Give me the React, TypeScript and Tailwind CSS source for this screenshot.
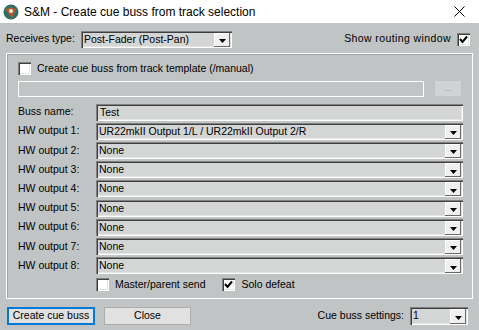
import React from "react";

const sunken =
  "shadow-[inset_1px_1px_0_#808080,inset_2px_2px_0_#404040,inset_-1px_-1px_0_#ffffff,inset_-2px_-2px_0_#e4e4e4]";

function Arrow() {
  return (
    <div className="absolute right-[2px] top-[2px] bottom-[1px] w-[16px] bg-[#f0f0f0] shadow-[inset_-1px_-1px_0_#696969,inset_1px_1px_0_#ffffff] flex items-center justify-center">
      <svg width="7" height="4" viewBox="0 0 7 4" className="mt-[3px]">
        <path d="M0 0h7L3.5 4z" fill="#000" />
      </svg>
    </div>
  );
}

function Combo({ text, className }: { text: string; className: string }) {
  return (
    <div className={`relative h-[17px] bg-[#d4d5d5] ${sunken} ${className}`}>
      <span className="absolute left-[3px] top-[1px] leading-[15px] whitespace-nowrap">{text}</span>
      <Arrow />
    </div>
  );
}

function Check({ checked }: { checked?: boolean }) {
  return (
    <div className={`w-[13px] h-[13px] shrink-0 bg-white ${sunken} flex items-center justify-center`}>
      {checked && (
        <svg width="9" height="9" viewBox="0 0 9 9">
          <path d="M1 4l2.5 3L8 1.5" stroke="#000" strokeWidth="2" fill="none" />
        </svg>
      )}
    </div>
  );
}

export default function App() {
  const outputs = [
    "UR22mkII Output 1/L / UR22mkII Output 2/R",
    "None",
    "None",
    "None",
    "None",
    "None",
    "None",
    "None",
  ];

  return (
    <div className="w-[479px] h-[330px] bg-[#c0c4c4] flex flex-col overflow-hidden text-[10.5px] text-black whitespace-nowrap font-['Liberation_Sans',Arial,sans-serif]">
      {/* title bar */}
      <div className="h-[23px] bg-white flex items-center shrink-0">
        <svg width="16" height="16" viewBox="0 0 16 16" className="ml-[3px]">
          <circle cx="8" cy="8" r="7.5" fill="#2d6f66" />
          <path d="M3 5.5C5 3 10 2.5 13 5.5L9 14C7 12 5 9 3 5.5z" fill="#b55a2b" />
          <circle cx="8" cy="7" r="2" fill="#e7e3dc" />
        </svg>
        <span className="ml-[5px] text-[12px] leading-none">
          S&amp;M - Create cue buss from track selection
        </span>
        <svg width="11" height="11" viewBox="0 0 11 11" className="ml-auto mr-[14px]">
          <path d="M0.5 0.5l10 10M10.5 0.5l-10 10" stroke="#000" strokeWidth="1" />
        </svg>
      </div>

      {/* receives type row */}
      <div className="flex items-center h-[18px] mt-[7px] px-[6px]">
        <span className="w-[75px]">Receives type:</span>
        <Combo text="Post-Fader (Post-Pan)" className="w-[151px]" />
        <span className="ml-auto mr-[6px] tracking-[0.4px]">Show routing window</span>
        <div className="mr-[3px]">
          <Check checked />
        </div>
      </div>

      {/* group box */}
      <div className="mx-[6px] mt-[5px] h-[246px] border border-[#ffffff] shadow-[inset_1px_1px_0_#a0a4a4] px-[11px] pt-[7px]">
        <div className="flex items-center gap-[6px]">
          <Check />
          <span>Create cue buss from track template (/manual)</span>
        </div>
        <div className="flex items-center mt-[4px]">
          <div className="w-[407px] h-[16px] border border-white" />
          <div className="ml-[11px] w-[26px] h-[15px] bg-[#d0d3d3] text-[#9a9a9a] text-[9px] flex items-center justify-center leading-none">
            ...
          </div>
        </div>
        <div className="flex items-center mt-[7px] h-[17px]">
          <span className="w-[78px]">Buss name:</span>
          <div className={`relative flex-1 h-[17px] bg-[#d4d5d5] mr-[-2px] ${sunken}`}>
            <span className="absolute left-[4px] top-[1px] leading-[15px]">Test</span>
          </div>
        </div>
        <div className="flex flex-col gap-[2.2px] mt-[2px] mr-[-2px]">
          {outputs.map((o, i) => (
            <div key={i} className="flex items-center h-[17px]">
              <span className="w-[78px]">HW output {i + 1}:</span>
              <Combo text={o} className="flex-1" />
            </div>
          ))}
        </div>
        <div className="flex items-center mt-[3px] ml-[78px] h-[15px]">
          <Check />
          <span className="ml-[6px]">Master/parent send</span>
          <div className="ml-[17px]">
            <Check checked />
          </div>
          <span className="ml-[6px]">Solo defeat</span>
        </div>
      </div>

      {/* bottom */}
      <div className="flex items-center mt-[8px] px-[7px] h-[18px]">
        <div className="w-[88px] h-[18px] border-2 border-[#0078d7] bg-[#e1e1e1] flex items-center justify-center">
          Create cue buss
        </div>
        <div className="ml-[9px] w-[87px] h-[18px] border border-[#adadad] bg-[#e1e1e1] flex items-center justify-center">
          Close
        </div>
        <span className="ml-auto mr-[6px]">Cue buss settings:</span>
        <Combo text="1" className="w-[58px] h-[18px] mr-[4px]" />
      </div>
    </div>
  );
}
